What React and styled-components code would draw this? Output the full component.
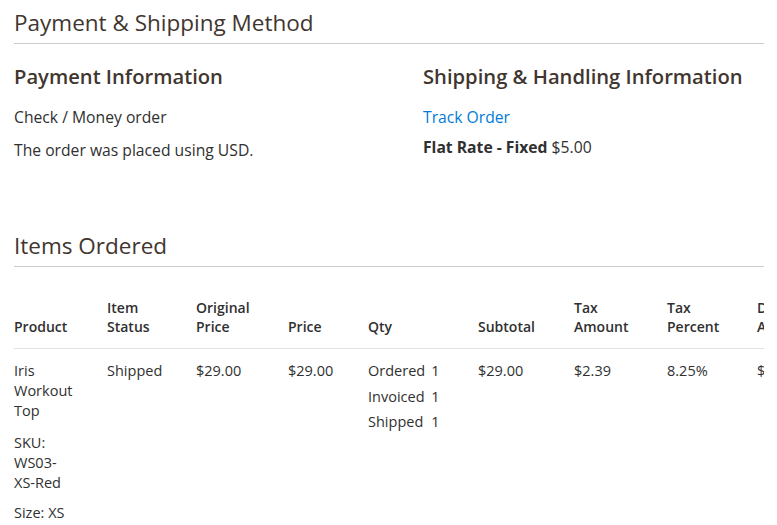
import styled, { createGlobalStyle } from "styled-components";

const GlobalStyle = createGlobalStyle`
  body {
    margin: 0;
    background: #ffffff;
    font-family: "Open Sans", "Liberation Sans", sans-serif;
    color: #303030;
  }
`;

const Page = styled.div`
  width: 750px;
  padding: 0 13px 0 14px;
`;

const Section = styled.section`
  margin-bottom: ${(props) => props.gap || "0"};
`;

const SectionTitle = styled.h2`
  margin: 0;
  padding: 8px 0 5px;
  font-size: 22.5px;
  line-height: 30px;
  font-weight: 400;
  color: #41362f;
  border-bottom: 1px solid #cccccc;
`;

const Columns = styled.div`
  display: grid;
  grid-template-columns: 409px 1fr;
  padding-top: 18px;
`;

const InfoBlock = styled.div`
  display: flex;
  flex-direction: column;
`;

const InfoTitle = styled.h3`
  margin: 0 0 15px;
  font-size: 20.2px;
  line-height: 28px;
  font-weight: 600;
  color: #41362f;
`;

const InfoLine = styled.div`
  font-size: 15.7px;
  line-height: 24px;
  margin-bottom: ${(props) => props.gap || "0"};
`;

const Link = styled.a`
  color: #007bdb;
  text-decoration: none;
  cursor: pointer;
`;

const TableWrap = styled.div`
  overflow: hidden;
  padding-top: 20px;
`;

const Table = styled.table`
  border-collapse: collapse;
  table-layout: fixed;
  width: ${(props) => props.width}px;
`;

const Th = styled.th`
  box-sizing: border-box;
  width: ${(props) => props.w}px;
  padding: 11px 10px 12px 0;
  text-align: left;
  vertical-align: bottom;
  font-size: 14px;
  line-height: 19px;
  font-weight: 600;
  color: #303030;
  border-bottom: 1px solid #e3e3e3;
`;

const Td = styled.td`
  box-sizing: border-box;
  padding: 12px ${(props) => props.pr || "10px"} 10px 0;
  vertical-align: top;
  font-size: 14.5px;
  line-height: 20px;
  color: #303030;
`;

const ProductName = styled.div`
  line-height: 20px;
`;

const Sku = styled.div`
  margin-top: 12px;
  line-height: 20px;
`;

const Option = styled.div`
  margin-top: 10px;
  line-height: 20px;
`;

const QtyGrid = styled.div`
  display: grid;
  grid-template-columns: auto auto;
  justify-content: start;
  column-gap: 6px;
  row-gap: 5.5px;
`;

const columns = [
  { label: ["Product"], w: 93 },
  { label: ["Item", "Status"], w: 89 },
  { label: ["Original", "Price"], w: 92 },
  { label: ["Price"], w: 80 },
  { label: ["Qty"], w: 110 },
  { label: ["Subtotal"], w: 96 },
  { label: ["Tax", "Amount"], w: 93 },
  { label: ["Tax", "Percent"], w: 90 },
  { label: ["Discount", "Amount"], w: 95 },
  { label: ["Row", "Total"], w: 90 },
];

const tableWidth = columns.reduce((sum, col) => sum + col.w, 0);

const qty = [
  ["Ordered", 1],
  ["Invoiced", 1],
  ["Shipped", 1],
];

const App = () => {
  return (
    <Page>
      <GlobalStyle />
      <Section gap="61px">
        <SectionTitle>Payment &amp; Shipping Method</SectionTitle>
        <Columns>
          <InfoBlock>
            <InfoTitle>Payment Information</InfoTitle>
            <InfoLine gap="9px">Check / Money order</InfoLine>
            <InfoLine>The order was placed using USD.</InfoLine>
          </InfoBlock>
          <InfoBlock>
            <InfoTitle>Shipping &amp; Handling Information</InfoTitle>
            <InfoLine gap="6px">
              <Link>Track Order</Link>
            </InfoLine>
            <InfoLine>
              <strong>Flat Rate - Fixed</strong> $5.00
            </InfoLine>
          </InfoBlock>
        </Columns>
      </Section>

      <Section>
        <SectionTitle>Items Ordered</SectionTitle>
        <TableWrap>
          <Table width={tableWidth}>
            <thead>
              <tr>
                {columns.map((col) => (
                  <Th key={col.label.join(" ")} w={col.w}>
                    {col.label.map((part, i) => (
                      <span key={part}>
                        {i > 0 && <br />}
                        {part}
                      </span>
                    ))}
                  </Th>
                ))}
              </tr>
            </thead>
            <tbody>
              <tr>
                <Td pr="33px">
                  <ProductName>Iris Workout Top</ProductName>
                  <Sku>SKU: WS03-XS-Red</Sku>
                  <Option>Size: XS</Option>
                </Td>
                <Td>Shipped</Td>
                <Td>$29.00</Td>
                <Td>$29.00</Td>
                <Td>
                  <QtyGrid>
                    {qty.map(([label, n]) => [
                      <span key={label}>{label}</span>,
                      <span key={label + "-n"}>{n}</span>,
                    ])}
                  </QtyGrid>
                </Td>
                <Td>$29.00</Td>
                <Td>$2.39</Td>
                <Td>8.25%</Td>
                <Td>$0.00</Td>
                <Td>$31.39</Td>
              </tr>
            </tbody>
          </Table>
        </TableWrap>
      </Section>
    </Page>
  );
};

export default App;
